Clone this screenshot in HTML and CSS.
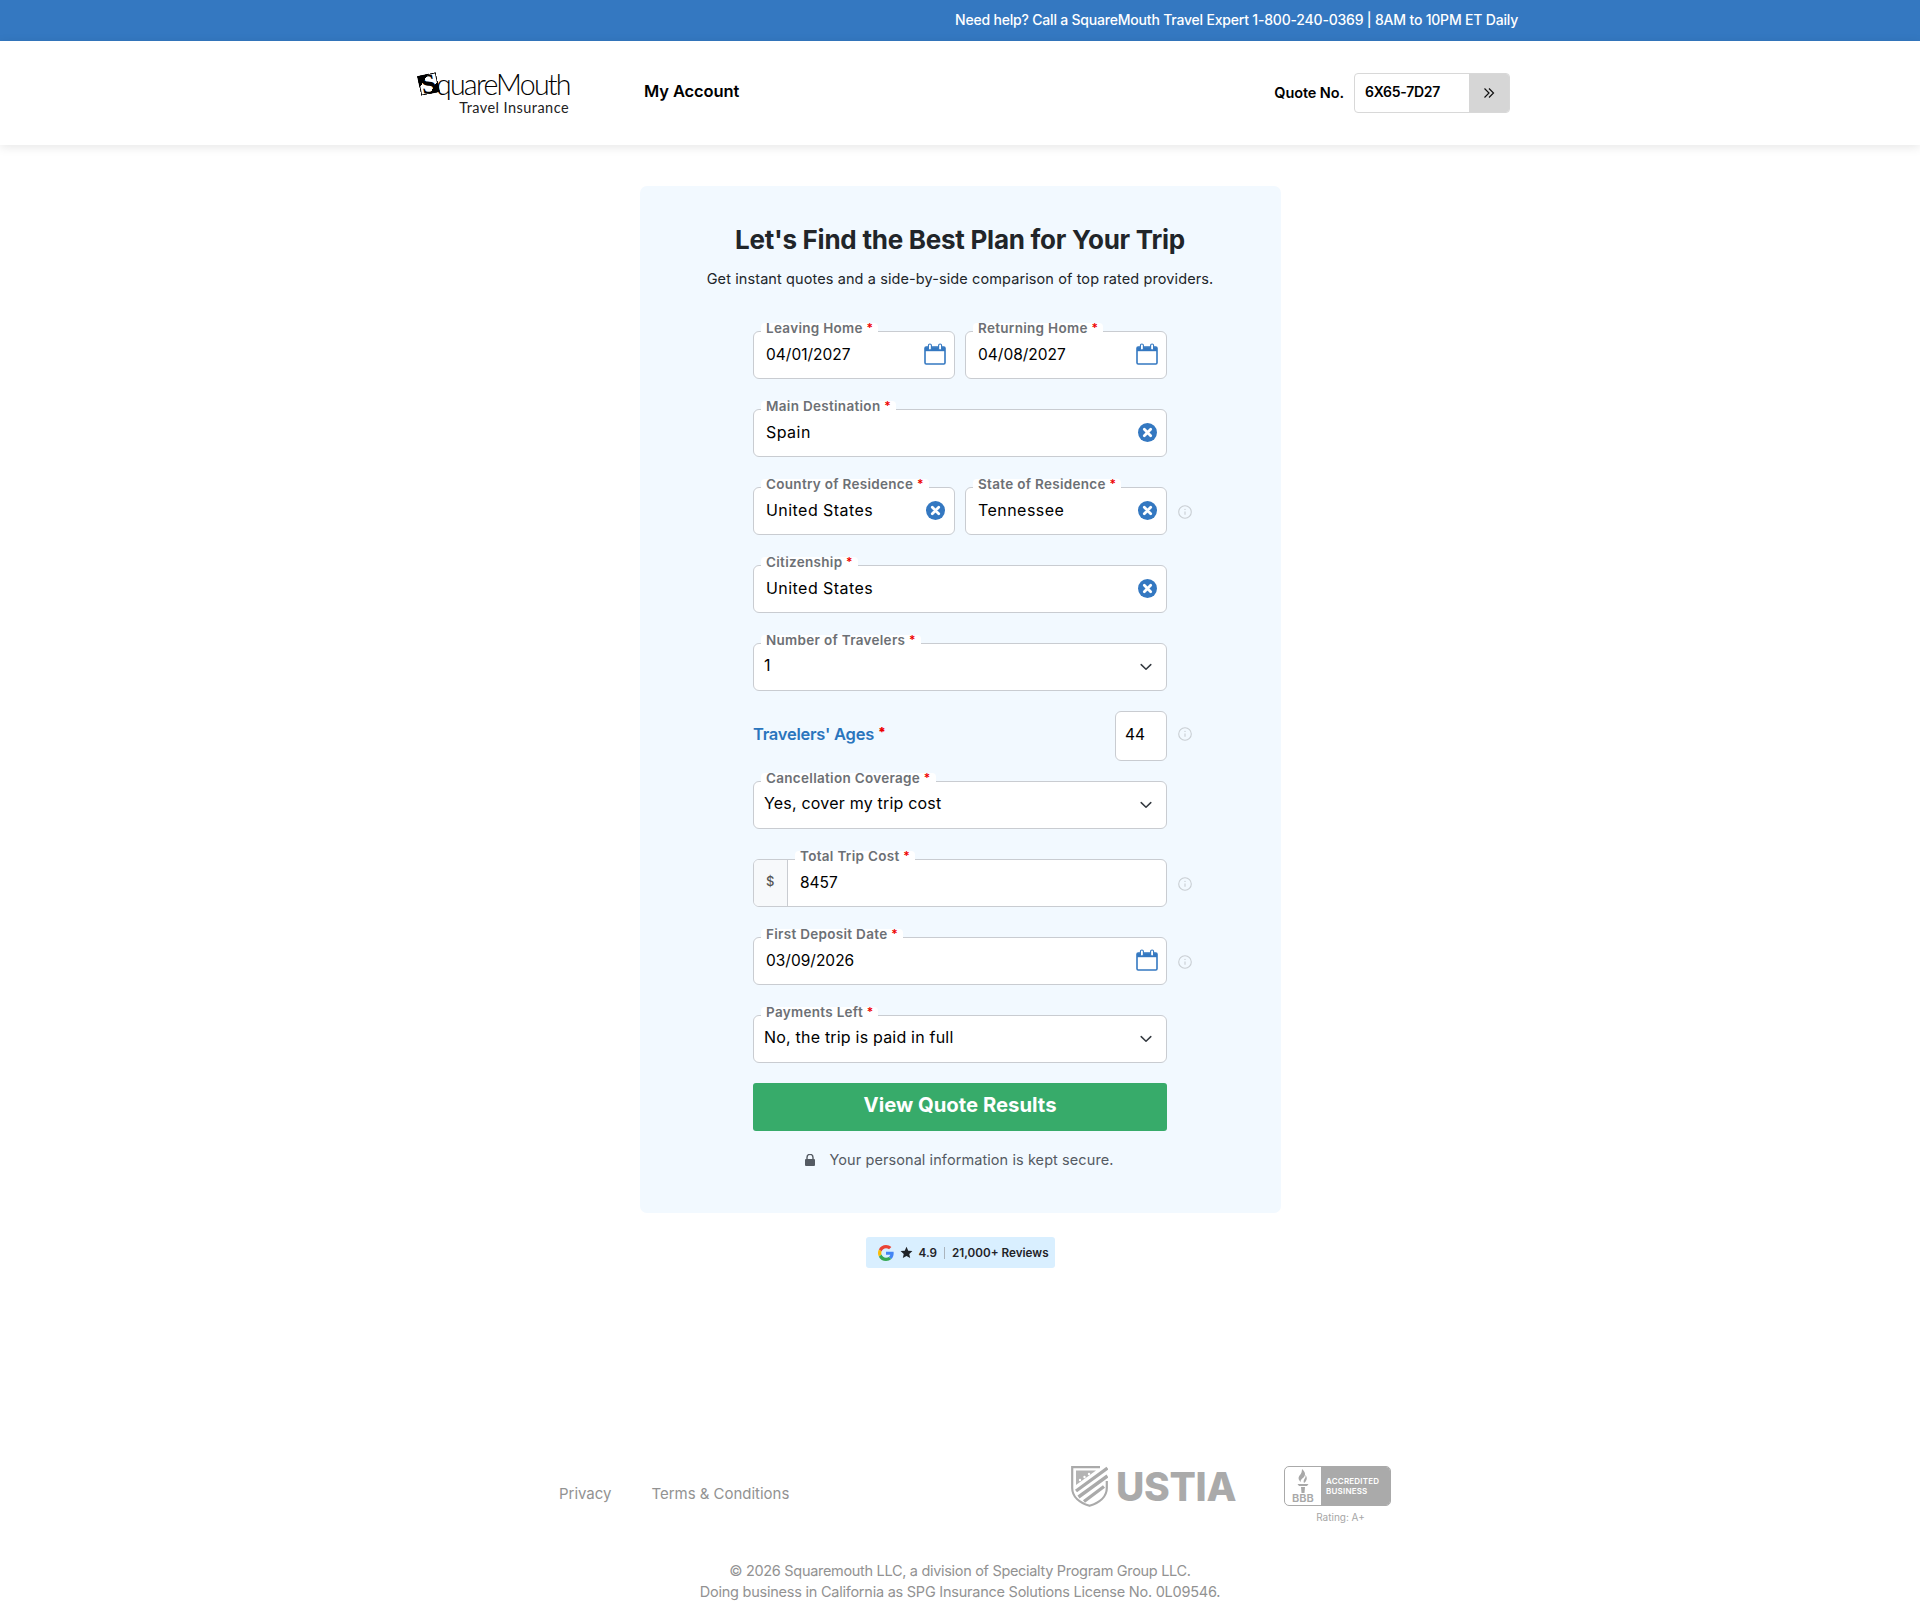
FILE: index.html
```html
<!DOCTYPE html>
<html lang="en">
<head>
<meta charset="utf-8">
<title>SquareMouth Travel Insurance</title>
<link rel="stylesheet" href="styles.css">
</head>
<body>
<svg class="defs" width="0" height="0" aria-hidden="true">
  <symbol id="cal" viewBox="0 0 22 22">
    <rect x="1" y="4" width="20" height="17" rx="1.2" fill="#fff" stroke="#3478c1" stroke-width="1.6"/>
    <path d="M1 4.200h20V8.200H1z" fill="#3478c1"/>
    <rect x="4.400" y="1" width="3" height="6" rx="1.500" fill="#fff" stroke="#3478c1" stroke-width="1.100"/>
    <rect x="14.600" y="1" width="3" height="6" rx="1.500" fill="#fff" stroke="#3478c1" stroke-width="1.100"/>
  </symbol>
  <symbol id="clr" viewBox="0 0 19 19">
    <circle cx="9.500" cy="9.500" r="9.500" fill="#3478c1"/>
    <path d="M6.300 6.300l6.400 6.400M12.700 6.300l-6.400 6.400" stroke="#fff" stroke-width="2.800" stroke-linecap="round"/>
  </symbol>
  <symbol id="chev" viewBox="0 0 12 8">
    <path d="M1.200 1.600L6 6.200l4.800-4.600" fill="none" stroke="#343a40" stroke-width="1.500" stroke-linecap="round" stroke-linejoin="round"/>
  </symbol>
  <symbol id="inf" viewBox="0 0 14 14">
    <circle cx="7" cy="7" r="6.300" fill="none" stroke="#c9ced3" stroke-width="1.100"/>
    <path d="M7 6.400v3.400" stroke="#c9ced3" stroke-width="1.100"/>
    <circle cx="7" cy="4.400" r=".7" fill="#c9ced3"/>
  </symbol>
</svg>

<div class="topbar">Need help? Call a SquareMouth Travel Expert 1-800-240-0369 | 8AM to 10PM ET Daily</div>

<header class="header">
  <div class="logo">
    <div class="logo-main"><span class="logo-tile"><span>S</span></span><span class="logo-word">quareMouth</span></div>
    <div class="logo-sub">Travel Insurance</div>
  </div>
  <a class="nav-link">My Account</a>
  <div class="quote">
    <span class="quote-label">Quote No.</span>
    <div class="quote-box">
      <span class="quote-value">6X65-7D27</span>
      <span class="quote-go"><svg width="12" height="12" viewBox="0 0 12 12"><path d="M1.500 1.500L6 6l-4.500 4.500M6 1.500L10.500 6 6 10.500" fill="none" stroke="#111" stroke-width="1.200"/></svg></span>
    </div>
  </div>
</header>

<main class="main">
  <section class="card">
    <h1 class="title">Let's Find the Best Plan for Your Trip</h1>
    <p class="subtitle">Get instant quotes and a side-by-side comparison of top rated providers.</p>
    <form class="form">
      <div class="row">
        <div class="field"><label class="lab">Leaving Home <b>*</b></label><span class="val num">04/01/2027</span><svg class="i-cal"><use href="#cal"/></svg></div>
        <div class="field"><label class="lab">Returning Home <b>*</b></label><span class="val num">04/08/2027</span><svg class="i-cal"><use href="#cal"/></svg></div>
      </div>
      <div class="row">
        <div class="field"><label class="lab">Main Destination <b>*</b></label><span class="val">Spain</span><svg class="i-clr"><use href="#clr"/></svg></div>
      </div>
      <div class="row">
        <div class="field"><label class="lab">Country of Residence <b>*</b></label><span class="val">United States</span><svg class="i-clr"><use href="#clr"/></svg></div>
        <div class="field"><label class="lab">State of Residence <b>*</b></label><span class="val">Tennessee</span><svg class="i-clr"><use href="#clr"/></svg></div>
        <svg class="i-inf"><use href="#inf"/></svg>
      </div>
      <div class="row">
        <div class="field"><label class="lab">Citizenship <b>*</b></label><span class="val">United States</span><svg class="i-clr"><use href="#clr"/></svg></div>
      </div>
      <div class="row row-tight">
        <div class="field select"><label class="lab">Number of Travelers <b>*</b></label><span class="val">1</span><svg class="i-chev"><use href="#chev"/></svg></div>
      </div>
      <div class="row row-ages">
        <div class="ages-title">Travelers' Ages <b>*</b></div>
        <div class="age-box">44</div>
        <svg class="i-inf i-inf-up"><use href="#inf"/></svg>
      </div>
      <div class="row">
        <div class="field select"><label class="lab">Cancellation Coverage <b>*</b></label><span class="val">Yes, cover my trip cost</span><svg class="i-chev"><use href="#chev"/></svg></div>
      </div>
      <div class="row">
        <div class="field money"><span class="addon">$</span><label class="lab">Total Trip Cost <b>*</b></label><span class="val num">8457</span></div>
        <svg class="i-inf"><use href="#inf"/></svg>
      </div>
      <div class="row">
        <div class="field"><label class="lab">First Deposit Date <b>*</b></label><span class="val num">03/09/2026</span><svg class="i-cal"><use href="#cal"/></svg></div>
        <svg class="i-inf"><use href="#inf"/></svg>
      </div>
      <div class="row row-tight">
        <div class="field select"><label class="lab">Payments Left <b>*</b></label><span class="val">No, the trip is paid in full</span><svg class="i-chev"><use href="#chev"/></svg></div>
      </div>
      <button class="submit" type="button">View Quote Results</button>
      <p class="secure"><svg width="10" height="12" viewBox="0 0 10 12"><path d="M2 5V3.400a3 3 0 0 1 6 0V5" fill="none" stroke="#555b63" stroke-width="1.400"/><rect y="5" width="10" height="7" rx="1" fill="#555b63"/></svg><span>Your personal information is kept secure.</span></p>
    </form>
  </section>
  <div class="reviews">
    <svg width="16" height="16" viewBox="0 0 48 48"><path fill="#EA4335" d="M24 9.500c3.500 0 6.700 1.200 9.200 3.600l6.900-6.900C35.900 2.400 30.500 0 24 0 14.600 0 6.500 5.400 2.600 13.200l8 6.200C12.500 13.600 17.800 9.500 24 9.500z"/><path fill="#4285F4" d="M47 24.500c0-1.600-.1-3.100-.4-4.500H24v9h12.900c-.6 3-2.200 5.500-4.700 7.200l7.700 6C44.400 37.600 47 31.600 47 24.500z"/><path fill="#FBBC05" d="M10.500 28.600A14.500 14.500 0 0 1 9.800 24c0-1.600.3-3.200.8-4.600l-8-6.200A24 24 0 0 0 0 24c0 3.900.9 7.500 2.600 10.800l7.900-6.200z"/><path fill="#34A853" d="M24 48c6.500 0 11.900-2.100 15.900-5.800l-7.700-6c-2.200 1.400-4.900 2.300-8.200 2.300-6.200 0-11.500-4.200-13.400-9.800l-8 6.200C6.500 42.600 14.600 48 24 48z"/></svg>
    <svg width="13" height="13" viewBox="0 0 24 24"><path fill="#1f2328" d="M12 1.500l3.200 7.100 7.700.8-5.800 5.200 1.700 7.600L12 18.300l-6.800 3.900 1.700-7.600L1.100 9.400l7.700-.8z"/></svg>
    <span class="rev-score">4.9</span><span class="rev-sep"></span><span class="rev-count">21,000+ Reviews</span>
  </div>
</main>

<footer class="footer">
  <div class="foot-top">
    <nav class="foot-links"><a>Privacy</a><a>Terms &amp; Conditions</a></nav>
    <div class="ustia">
      <svg class="ustia-shield" width="37" height="41" viewBox="0 0 37 41">
        <path d="M29 1.200H1.200V22C1.200 31 9 37 18.500 39.800 28 37 35.800 31 35.800 22V15" fill="none" stroke="#aaa" stroke-width="2.200"/>
        <path d="M5 4.500h20L5 19z" fill="#b4b4b4"/>
        <circle cx="9" cy="14" r="1.200" fill="#fff"/><circle cx="13.500" cy="11" r="1.200" fill="#fff"/><circle cx="18" cy="8" r="1.200" fill="#fff"/>
        <path d="M5 25L36.500 2M7.500 31L36.500 10M13 35.500L33 20.500" fill="none" stroke="#aaa" stroke-width="3.400"/>
      </svg>
      <span>USTIA</span>
    </div>
    <div class="bbb">
      <div class="bbb-badge">
        <div class="bbb-left">
          <svg width="16" height="24" viewBox="0 0 16 24"><path d="M7 0C10 3 11 5 9 8 7 10 5 11 6 13 3 11 3 8 5 6 6 5 7 3 7 0zM10 6C13 8 12 12 9 14 8 12 9 11 10 9 11 8 10.500 7 10 6zM2.500 15H13.500L12 17H4zM6 18h4l-.5 6h-3z" fill="#a8a8a8"/></svg>
          <span class="bbb-txt">BBB</span>
        </div>
        <div class="bbb-right">ACCREDITED<br>BUSINESS</div>
      </div>
      <div class="bbb-rating">Rating: A+</div>
    </div>
  </div>
  <div class="copy"><div class="copy-a">© 2026 Squaremouth LLC, a division of Specialty Program Group LLC.</div><div class="copy-b">Doing business in California as SPG Insurance Solutions License No. 0L09546.</div></div>
</footer>
</body>
</html>
```

FILE: styles.css
```css
* { box-sizing: border-box; }
html, body { margin: 0; padding: 0; }
body { font-family: Inter, "Liberation Sans", sans-serif; background: #fff; color: #000; height: 1623px; overflow: hidden; }
.defs { position: absolute; }

.topbar { height: 41px; background: #3478c1; color: #fff; display: flex; align-items: center; justify-content: flex-end; padding: 0 402px 3px 0; font-size: 14px; font-weight: 500; letter-spacing: -0.2px; }

.header { height: 104px; background: #fff; display: flex; align-items: center; padding: 0 410px 0 417px; box-shadow: 0 2px 10px rgba(0,0,0,.1); position: relative; }
.logo { width: 152px; margin-top: 1px; }
.logo-main { display: flex; align-items: center; height: 26px; }
.logo-tile { width: 19px; height: 20px; margin-left: 2px; transform: rotate(-12deg); background: linear-gradient(135deg, #000 30%, #fff 30%, #fff 72%, #000 72%); box-shadow: inset 0 0 0 1px #000; display: flex; align-items: center; justify-content: center; flex: none; }
.logo-tile span { font-family: "Liberation Serif", serif; font-weight: 700; font-size: 27px; line-height: 20px; color: #000; }
.logo-word { font-family: Lato, sans-serif; font-weight: 300; font-size: 28.5px; letter-spacing: -1.75px; line-height: 26px; color: #000; margin-left: -2px; }
.logo-sub { font-family: Lato, sans-serif; font-size: 14.5px; letter-spacing: .45px; text-align: right; line-height: 16px; color: #222; margin-top: 3px; }
.nav-link { margin: -5px 0 0 75px; font-size: 16.5px; font-weight: 600; letter-spacing: -0.1px; }
.quote { margin-left: auto; display: flex; align-items: center; margin-top: -1px; }
.quote-label { font-size: 14.5px; font-weight: 600; letter-spacing: -0.1px; margin-right: 10px; }
.quote-box { width: 156px; height: 40px; border: 1px solid #d8d8d8; border-radius: 4px; display: flex; overflow: hidden; }
.quote-value { flex: 1; font-size: 14px; font-weight: 600; padding-left: 10px; line-height: 36px; letter-spacing: -0.25px; }
.quote-go { width: 40px; background: #d6d6d6; display: flex; align-items: center; justify-content: center; }

.main { display: flex; flex-direction: column; align-items: center; padding-top: 41px; }
.card { width: 641px; height: 1027px; background: #f2f9ff; border-radius: 7px; display: flex; flex-direction: column; align-items: center; padding-top: 38px; }
.title { margin: 0; font-size: 26px; line-height: 32px; font-weight: 700; color: #212529; letter-spacing: -0.25px; }
.subtitle { margin: 13px 0 0; font-size: 14.5px; line-height: 20px; color: #212529; letter-spacing: 0.1px; }
.form { width: 414px; margin-top: 42px; display: flex; flex-direction: column; }

.row { display: flex; gap: 10px; margin-bottom: 30px; align-items: center; }
.row-tight { margin-bottom: 20px; }
.row-ages { margin-bottom: 20px; height: 50px; justify-content: space-between; }

.field { position: relative; flex: 1; height: 48px; background: #fff; border: 1px solid #c9ccd1; border-radius: 6px; display: flex; align-items: center; padding: 0 9px 0 12px; }
.lab { position: absolute; left: 7px; top: -9px; height: 9px; padding: 0 5px; background: #fff; border-radius: 4px 4px 0 0; font-size: 13.5px; line-height: 10px; font-weight: 600; color: #6c7075; white-space: nowrap; letter-spacing: .3px; }
.lab b { color: #e00; font-weight: 600; font-size: 12px; vertical-align: 1px; }
.val { flex: 1; font-size: 16px; color: #000; white-space: nowrap; letter-spacing: .45px; margin-top: -2px; }
.num { font-size: 15.5px; letter-spacing: 0; margin-top: -1px; }
.select { padding-left: 10px; }
.select .val { margin-top: -4px; letter-spacing: .2px; }
.i-cal { width: 22px; height: 22px; flex: none; margin: -2px -1px 0 0; }
.i-clr { width: 19px; height: 19px; flex: none; margin-top: -2px; }
.i-chev { width: 12px; height: 8px; flex: none; margin-right: 5px; }
.i-inf { width: 14px; height: 14px; flex: none; margin: 2px -25px 0 1px; }
.i-inf-up { margin-top: -4px; }

.money { padding-left: 46px; }
.money .lab { left: 41px; }
.money .val { margin-top: -2px; }
.addon { position: absolute; left: 0; top: 0; bottom: 0; width: 34px; background: #f7f9fb; border-right: 1px solid #c9ccd1; border-radius: 5px 0 0 5px; font-size: 13px; font-weight: 500; color: #555; display: flex; align-items: center; padding: 0 0 5px 12px; }

.ages-title { font-size: 16.5px; font-weight: 600; color: #2a75bd; letter-spacing: -0.25px; margin-top: -4px; }
.ages-title b { color: #e00; font-size: 13px; vertical-align: 3px; }
.age-box { margin-left: auto; width: 52px; height: 50px; background: #fff; border: 1px solid #c9ccd1; border-radius: 6px; font-size: 15.5px; line-height: 46px; padding-left: 9px; }

.submit { height: 48px; width: 100%; border: 0; border-radius: 3px; background: #37ab6a; color: #fff; font-family: inherit; font-size: 20.3px; font-weight: 700; line-height: 44px; padding: 0 0 4px; }
.secure { margin: 19px 0 0; padding-right: 2px; display: flex; justify-content: center; align-items: center; gap: 15px; font-size: 14.5px; line-height: 20px; color: #555b63; letter-spacing: .08px; }

.reviews { margin-top: 24px; width: 189px; height: 31px; background: #d9efff; border-radius: 3px; display: flex; align-items: center; padding-left: 12px; font-size: 11.7px; font-weight: 600; color: #1f2328; }
.reviews svg + svg { margin-left: 6px; }
.rev-score { margin-left: 6px; }
.rev-sep { width: 1px; height: 12px; background: #aab4bd; margin: 0 7px; }

.footer { padding-top: 198px; }
.foot-top { display: flex; padding-left: 559px; height: 64px; }
.foot-links { display: flex; gap: 40px; width: 232px; flex: none; white-space: nowrap; font-size: 15px; letter-spacing: -0.02px; color: #929292; height: 54px; align-items: center; }
.ustia { margin-left: 280px; display: flex; align-items: center; gap: 8px; height: 41px; width: 165px; flex: none; font-size: 39px; font-weight: 800; letter-spacing: -0.3px; color: #aaa; }
.ustia-shield { flex: none; }
.bbb { margin-left: 48px; width: 107px; display: flex; flex-direction: column; }
.bbb-badge { height: 40px; display: flex; border: 1px solid #aaa; border-radius: 5px; overflow: hidden; }
.bbb-left { width: 36px; display: flex; flex-direction: column; align-items: center; padding-top: 2px; }
.bbb-txt { font-size: 11px; line-height: 9px; color: #a8a8a8; font-weight: 600; margin-top: 1px; }
.bbb-right { flex: 1; background: #aaa; color: #fff; font-size: 8px; font-weight: 600; line-height: 10px; padding: 9px 0 0 5px; letter-spacing: .2px; }
.bbb-rating { text-align: center; font-size: 10px; color: #a6a6a6; margin-top: 5px; padding-left: 6px; }
.copy { text-align: center; font-size: 14.5px; line-height: 21px; color: #929292; margin-top: 30px; }
.copy-a { letter-spacing: -0.31px; }
.copy-b { letter-spacing: -0.24px; }
```
